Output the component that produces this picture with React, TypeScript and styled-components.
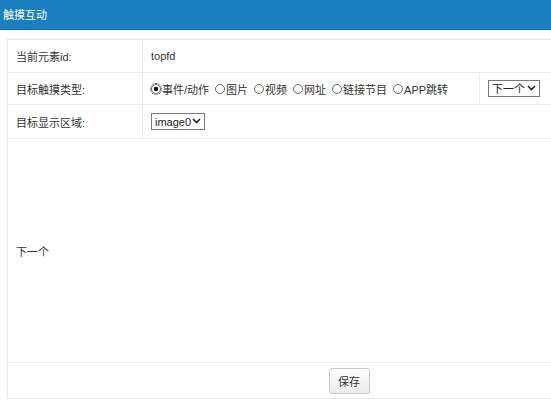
import React from 'react'
import styled, {createGlobalStyle} from "styled-components";

const Global = createGlobalStyle`
  html, body {
    margin: 0;
    padding: 0;
    background: #ffffff;
    overflow: hidden;
  }
  body {
    font-family: "Liberation Sans", "Noto Sans CJK SC", sans-serif;
    font-size: 11px;
    color: #333333;
  }
`
const Header = styled.div`
  height: 30px;
  background-color: #1a7fc1;
  border-bottom: 1px solid #1670ab;
  color: #ffffff;
  font-size: 11px;
  line-height: 30px;
  padding-left: 3px;
  box-sizing: border-box;
`
const Panel = styled.div`
  padding: 9px 0 0 7px;
`
const Table = styled.table`
  width: 684px;
  table-layout: fixed;
  border-collapse: collapse;
  border: 1px solid #e6e6e6;
  box-shadow: 0 0 2px rgba(0, 0, 0, 0.08);
`
const Col = styled.col<{ $w?: number }>`
  width: ${p => p.$w ? p.$w + 'px' : 'auto'};
`
const Cell = styled.td<{ $h?: number, $center?: boolean }>`
  border: 1px solid #ececec;
  padding: 0 8px;
  height: ${p => p.$h || 31}px;
  text-align: ${p => p.$center ? 'center' : 'left'};
  vertical-align: middle;
  white-space: nowrap;
  overflow: hidden;
`
const Radios = styled.div`
  display: flex;
  align-items: center;
`
const RadioLabel = styled.label<{ $focus?: boolean }>`
  display: flex;
  align-items: center;
  margin-right: 6px;
  input {
    appearance: none;
    box-sizing: border-box;
    width: 10px;
    height: 10px;
    margin: 0 1px 0 0;
    border: 1px solid #6a6a6a;
    border-radius: 50%;
    background: #ffffff;
    outline: ${p => p.$focus ? '1px dotted #333' : 'none'};
    outline-offset: 0;
  }
  input:checked {
    background: radial-gradient(circle, #111 0, #111 2px, #fff 2.6px);
  }
`
const SelectWrap = styled.span`
  position: relative;
  display: inline-block;
  vertical-align: middle;
`
const Select = styled.select<{ $w: number }>`
  appearance: none;
  display: block;
  font-family: "Liberation Sans", "Noto Sans CJK SC", sans-serif;
  font-size: 11px;
  width: ${p => p.$w}px;
  height: 17px;
  padding: 0 12px 0 3px;
  border: 1px solid #7a7a7a;
  border-radius: 0;
  background: #ffffff;
  color: #222;
  outline: none;
`
const Chevron = styled.svg`
  position: absolute;
  right: 4px;
  top: 5px;
  pointer-events: none;
`
const Button = styled.button`
  font-family: "Liberation Sans", "Noto Sans CJK SC", sans-serif;
  font-size: 11px;
  width: 41px;
  height: 26px;
  border: 1px solid #c9c9c9;
  border-radius: 3px;
  background: linear-gradient(#fdfdfd, #ececec);
  color: #333;
  padding: 0;
`

const types = ['事件/动作', '图片', '视频', '网址', '链接节目', 'APP跳转']

const Dropdown = (props: { w: number, value: string, label: string }) =>
    <SelectWrap>
        <Select $w={props.w} defaultValue={props.value}>
            <option value={props.value}>{props.label}</option>
        </Select>
        <Chevron width="9" height="6" viewBox="0 0 9 6">
            <path d="M1 1 L4.5 4.5 L8 1" fill="none" stroke="#222" strokeWidth="1.6"/>
        </Chevron>
    </SelectWrap>

const App = () => {
    return (
        <>
            <Global/>
            <Header>触摸互动</Header>
            <Panel>
                <Table>
                    <colgroup>
                        <Col $w={135}/>
                        <Col $w={337}/>
                        <Col/>
                    </colgroup>
                    <tbody>
                    <tr>
                        <Cell $h={32}>当前元素id:</Cell>
                        <Cell colSpan={2}>topfd</Cell>
                    </tr>
                    <tr>
                        <Cell>目标触摸类型:</Cell>
                        <Cell>
                            <Radios>
                                {types.map((t, i) =>
                                    <RadioLabel key={t} $focus={i === 0}>
                                        <input type="radio" name="type" defaultChecked={i === 0}/>
                                        {t}
                                    </RadioLabel>
                                )}
                            </Radios>
                        </Cell>
                        <Cell>
                            <Dropdown w={52} value="next" label="下一个"/>
                        </Cell>
                    </tr>
                    <tr>
                        <Cell $h={33}>目标显示区域:</Cell>
                        <Cell colSpan={2}>
                            <Dropdown w={54} value="image0" label="image0"/>
                        </Cell>
                    </tr>
                    <tr>
                        <Cell colSpan={3} $h={223}>下一个</Cell>
                    </tr>
                    <tr>
                        <Cell colSpan={3} $h={35} $center>
                            <Button>保存</Button>
                        </Cell>
                    </tr>
                    </tbody>
                </Table>
            </Panel>
        </>
    )
}

export default App
